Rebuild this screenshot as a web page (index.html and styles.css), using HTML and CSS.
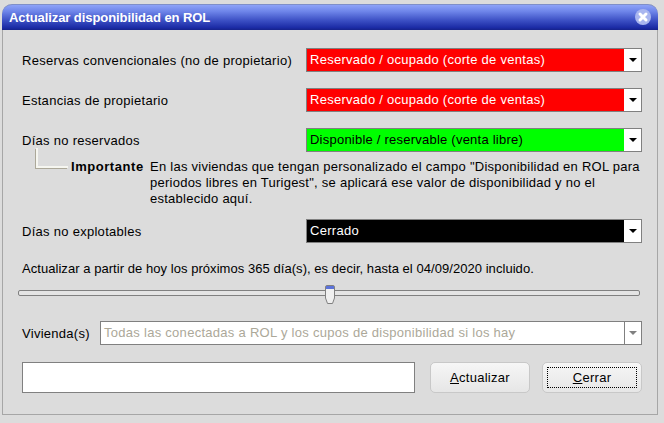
FILE: index.html
```html
<!DOCTYPE html>
<html lang="es">
<head>
<meta charset="utf-8">
<title>Actualizar disponibilidad en ROL</title>
<link rel="stylesheet" href="styles.css">
</head>
<body>
<div class="window">
  <div class="titlebar">
    <span class="title">Actualizar disponibilidad en ROL</span>
    <svg class="close" width="16" height="16" viewBox="0 0 16 16"><circle cx="8" cy="8" r="8" fill="#a9b6ef"/><path d="M5 5l6 6M11 5l-6 6" stroke="#fff" stroke-width="3" stroke-linecap="round"/></svg>
  </div>
  <div class="content">
    <div class="row r1">
      <span class="label">Reservas convencionales (no de propietario)</span>
      <div class="select red"><span class="val">Reservado / ocupado (corte de ventas)</span><span class="drop"><i class="arrow"></i></span></div>
    </div>
    <div class="row r2">
      <span class="label">Estancias de propietario</span>
      <div class="select red"><span class="val">Reservado / ocupado (corte de ventas)</span><span class="drop"><i class="arrow"></i></span></div>
    </div>
    <div class="row r3">
      <span class="label">Días no reservados</span>
      <div class="select green"><span class="val">Disponible / reservable (venta libre)</span><span class="drop"><i class="arrow"></i></span></div>
    </div>
    <div class="note">
      <span class="connector"></span>
      <strong class="note-title">Importante</strong>
      <p class="note-text">En las viviendas que tengan personalizado el campo "Disponibilidad en ROL para periodos libres en Turigest", se aplicará ese valor de disponibilidad y no el establecido aquí.</p>
    </div>
    <div class="row r4">
      <span class="label">Días no explotables</span>
      <div class="select black"><span class="val">Cerrado</span><span class="drop"><i class="arrow"></i></span></div>
    </div>
    <p class="range-text">Actualizar a partir de hoy los próximos 365 día(s), es decir, hasta el 04/09/2020 incluido.</p>
    <div class="slider">
      <div class="track"></div>
      <svg class="thumb" width="10" height="20" viewBox="0 0 10 20"><path d="M.5 2a1.500 1.500 0 0 1 1.500-1.500h6a1.500 1.500 0 0 1 1.500 1.500v11l-2 5.500h-5l-2-5.500z" fill="#efefef" stroke="#808080"/><path d="M1 1h8v3H1z" fill="#5c73d9"/></svg>
    </div>
    <div class="row r5">
      <span class="label v-label">Vivienda(s)</span>
      <div class="select disabled"><span class="val">Todas las conectadas a ROL y los cupos de disponibilidad si los hay</span><span class="drop"><i class="arrow"></i></span></div>
    </div>
    <div class="actions">
      <div class="textbox"></div>
      <button class="btn btn-update" type="button"><u>A</u>ctualizar</button>
      <button class="btn btn-close" type="button"><span class="focus"><u>C</u>errar</span></button>
    </div>
  </div>
</div>
</body>
</html>
```
FILE: styles.css
```css
* { box-sizing: border-box; }
html, body { margin: 0; height: 100%; }
body {
  background: #dcdcdc;
  font-family: "Liberation Sans", Arial, sans-serif;
  font-size: 13px;
  color: #000;
  padding: 4px 6px 0 2px;
  overflow: hidden;
}
.window {
  height: 411px;
  border: 1px solid #a6a6a6;
  border-top: 0;
  border-radius: 10px 10px 0 0;
  background: #dcdcdc;
}
.titlebar {
  height: 26px;
  margin: 0 -1px;
  border-radius: 10px 10px 0 0;
  border-top: 1px solid #7f8fc8;
  background: linear-gradient(#8ea3f8 0, #6f86ea 25%, #3e52c6 60%, #1c2ca6 90%, #16228c 100%);
  display: flex;
  align-items: center;
  justify-content: space-between;
  padding: 0 7px 0 7px;
}
.title {
  color: #fff;
  font-weight: bold;
  font-size: 13px;
  letter-spacing: -.08px;
}
.close { display: block; margin-top: -2px; }
.content { padding: 18px 15px 0 19px; }
.row { display: flex; align-items: center; height: 24px; }
.r2, .r3 { margin-top: 16px; }
.r4 { margin-top: 12px; }
.r5 { margin-top: 16px; height: 24px; }
.label { width: 284px; flex: none; letter-spacing: .28px; }
.v-label { width: 78px; margin-left: 0; }
.select {
  flex: 1;
  height: 24px;
  display: flex;
  border: 1px solid #808080;
}
.val { flex: 1; padding: 0 3px; line-height: 22px; letter-spacing: .28px; white-space: nowrap; }
.red { background: #f00; color: #fff; }
.green { background: #0f0; color: #000; }
.green .val { letter-spacing: .23px; }
.black { background: #000; color: #fff; }
.disabled { background: #fff; color: #aca899; }
.drop {
  width: 17px;
  background: #fff;
  display: flex;
  align-items: center;
  justify-content: center;
}
.disabled .drop { border-left: 1px solid #808080; }
.arrow {
  width: 0; height: 0;
  border: 4px solid transparent;
  border-top: 4px solid #000;
  border-bottom: 0;
}
.disabled .arrow { border-top-color: #808080; }
.note { display: flex; align-items: flex-start; margin-top: 7px; height: 48px; }
.connector {
  width: 32px;
  height: 20px;
  margin: -11px 3px 0 14px;
  flex: none;
  border-left: 2px solid #f6f6f0;
  border-bottom: 2px solid #f6f6f0;
  box-shadow: -1px 1px 0 #aca899;
}
.note-title { width: 79px; flex: none; letter-spacing: .55px; line-height: 16px; }
.note-text { margin: 0; width: 492px; line-height: 16px; letter-spacing: .25px; }
.range-text { margin: 18px 0 0; line-height: 16px; letter-spacing: .05px; }
.slider { position: relative; height: 20px; margin: 8px 0 0 -4px; width: 622px; }
.track {
  position: absolute;
  left: 0; right: 0; top: 5px;
  height: 6px;
  border: 1px solid #808080;
  border-radius: 2px;
  background: #e4e4e4;
}
.thumb { position: absolute; left: 307px; top: 0; }
.actions { display: flex; margin-top: 17px; height: 31px; }
.textbox { width: 393px; border: 1px solid #808080; background: #fff; margin-left: 0; }
.btn {
  width: 100px;
  height: 31px;
  margin-left: 15px;
  border: 1px solid #c8c8c8;
  border-radius: 5px;
  background: linear-gradient(#f6f6f6, #e6e6e6);
  font: 13px "Liberation Sans", Arial, sans-serif;
  letter-spacing: .28px;
  color: #000;
  padding: 0;
}
.btn-close { margin-left: 12px; padding: 4px; }
.focus {
  display: flex;
  align-items: center;
  justify-content: center;
  height: 100%;
  border: 1px dotted #000;
  white-space: pre;
}
```
